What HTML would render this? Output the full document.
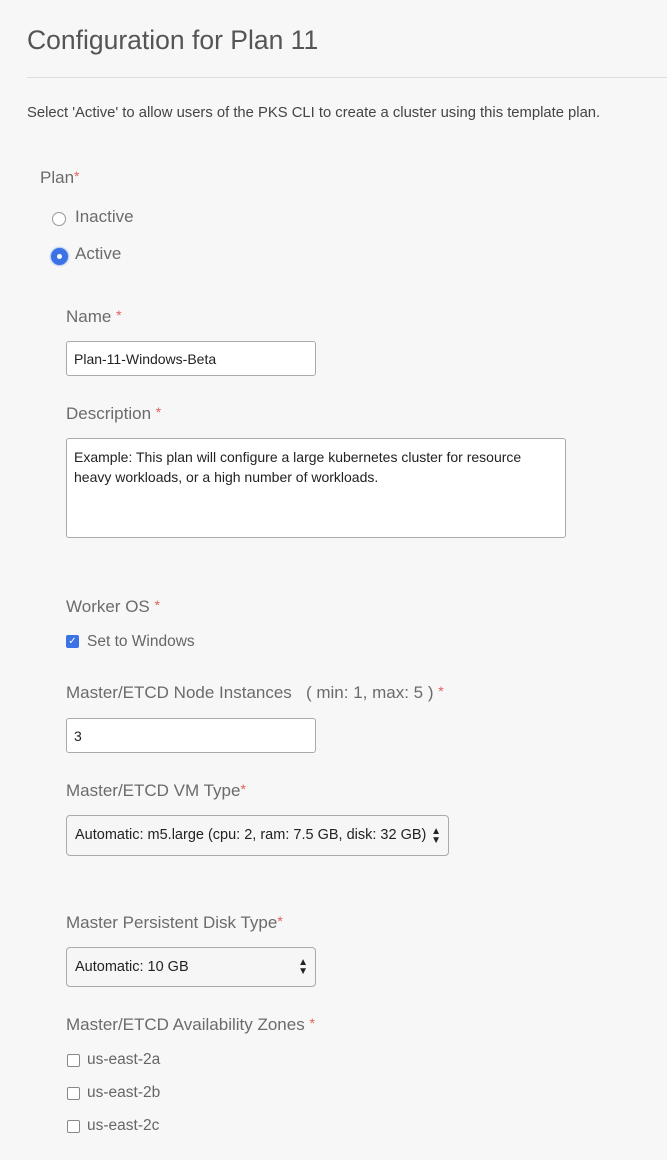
<!DOCTYPE html>
<html><head><meta charset="utf-8"><style>
body{margin:0;width:667px;height:1160px;background:#f7f7f7;font-family:"Liberation Sans",sans-serif;position:relative;overflow:hidden;color:#666}
.a{position:absolute;white-space:nowrap}
.lbl{font-size:17px;color:#6b6b6b}
.r{color:#e4605a;font-size:14px;vertical-align:top}
.box{position:absolute;background:#fff;border:1px solid #aaa;border-radius:3px;box-sizing:border-box}
.val{font-size:14px;color:#222}
.cb{position:absolute;width:13px;height:13px;border:1px solid #888;border-radius:2px;background:#fff;box-sizing:border-box}
.sel{background:#f6f6f6;border-color:#aaa;border-radius:4px}
.arr{position:absolute;right:7px;top:50%;transform:translateY(-50%);font-size:10px;line-height:9px;color:#222}
.ck{font-size:15.5px;color:#666}
</style></head><body>
<div class="a" style="left:27px;top:25px;font-size:26.5px;color:#555">Configuration for Plan 11</div>
<div class="a" style="left:27px;top:77px;width:640px;height:1px;background:#ddd"></div>
<div class="a" style="left:27px;top:105px;font-size:14.8px;color:#444">Select 'Active' to allow users of the PKS CLI to create a cluster using this template plan.</div>
<div class="a lbl" style="left:40px;top:168px">Plan<span class="r">*</span></div>
<div class="a" style="left:52px;top:212px;width:14px;height:14px;border:1px solid #999;border-radius:50%;background:#fff;box-sizing:border-box"></div>
<div class="a lbl" style="left:75px;top:207px">Inactive</div>
<div class="a" style="left:51px;top:248px;width:17px;height:17px;border-radius:50%;background:#3b73e6;box-shadow:0 0 2px #3b73e6"></div>
<div class="a" style="left:57px;top:254px;width:5px;height:5px;border-radius:50%;background:#fff"></div>
<div class="a lbl" style="left:75px;top:244px">Active</div>

<div class="a lbl" style="left:66px;top:307px">Name <span class="r">*</span></div>
<div class="box" style="left:66px;top:341px;width:250px;height:35px"><span class="a val" style="left:7px;top:9px">Plan-11-Windows-Beta</span></div>

<div class="a lbl" style="left:66px;top:404px">Description <span class="r">*</span></div>
<div class="box" style="left:66px;top:438px;width:500px;height:100px"><div class="val" style="position:absolute;left:7px;top:8px;line-height:20px;width:488px">Example: This plan will configure a large kubernetes cluster for resource heavy workloads, or a high number of workloads.</div></div>

<div class="a lbl" style="left:66px;top:597px">Worker OS <span class="r">*</span></div>
<div class="a" style="left:66px;top:635px;width:13px;height:13px;background:#3b73e6;border-radius:2px;color:#fff;font-size:10px;line-height:13px;text-align:center">✓</div>
<div class="a ck" style="left:87px;top:633px">Set to Windows</div>

<div class="a lbl" style="left:66px;top:683px">Master/ETCD Node Instances &nbsp;&nbsp;( min: 1, max: 5 ) <span class="r">*</span></div>
<div class="box" style="left:66px;top:718px;width:250px;height:35px"><span class="a val" style="left:7px;top:9px">3</span></div>

<div class="a lbl" style="left:66px;top:781px">Master/ETCD VM Type<span class="r">*</span></div>
<div class="box sel" style="left:66px;top:815px;width:383px;height:41px"><span class="a val" style="left:8px;top:11px;font-size:14.5px">Automatic: m5.large (cpu: 2, ram: 7.5 GB, disk: 32 GB)</span><span class="arr">▲<br>▼</span></div>

<div class="a lbl" style="left:66px;top:913px">Master Persistent Disk Type<span class="r">*</span></div>
<div class="box sel" style="left:66px;top:947px;width:250px;height:40px"><span class="a val" style="left:8px;top:11px;font-size:14.5px">Automatic: 10 GB</span><span class="arr">▲<br>▼</span></div>

<div class="a lbl" style="left:66px;top:1015px">Master/ETCD Availability Zones <span class="r">*</span></div>
<div class="cb" style="left:67px;top:1054px"></div><div class="a ck" style="left:87px;top:1051px">us-east-2a</div>
<div class="cb" style="left:67px;top:1087px"></div><div class="a ck" style="left:87px;top:1084px">us-east-2b</div>
<div class="cb" style="left:67px;top:1120px"></div><div class="a ck" style="left:87px;top:1117px">us-east-2c</div>
</body></html>
